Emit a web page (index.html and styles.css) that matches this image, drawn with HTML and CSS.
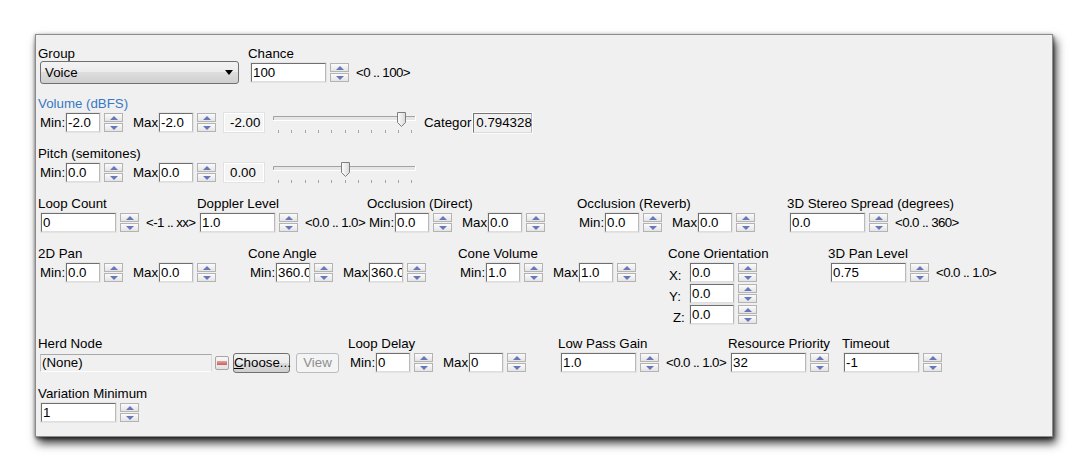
FILE: index.html
```html
<!DOCTYPE html>
<html>
<head>
<meta charset="utf-8">
<link rel="stylesheet" href="styles.css">
</head>
<body>
<div class="panel">
  <div class="row">
    <div class="grp w210">
      <div class="lbl">Group</div>
      <div class="ctl"><div class="combo"><span>Voice</span><span class="caret"></span></div></div>
    </div>
    <div class="grp">
      <div class="lbl">Chance</div>
      <div class="ctl p3"><span class="tb b">100</span><span class="spin"><i></i><i class="dn"></i></span><span class="rng">&lt;0 .. 100&gt;</span></div>
    </div>
  </div>

  <div class="row">
    <div class="grp">
      <div class="lbl blue">Volume (dBFS)</div>
      <div class="ctl p2">
        <span class="k">Min:</span><span class="tb s">-2.0</span><span class="spin"><i></i><i class="dn"></i></span>
        <span class="k mx">Max</span><span class="tb s">-2.0</span><span class="spin"><i></i><i class="dn"></i></span>
        <span class="ro">-2.00</span>
        <svg class="slider" width="144" height="22" viewBox="0 0 144 22">
          <defs><linearGradient id="tg1" x1="0" y1="0" x2="1" y2="0"><stop offset="0" stop-color="#fdfdfd"/><stop offset="1" stop-color="#d9d9d9"/></linearGradient></defs>
          <rect x="1" y="4" width="142" height="4" fill="#e6e6e6"/>
          <path d="M1.5 8 V4.5 H143" fill="none" stroke="#a3a3a3"/>
          <path d="M1 8.5 H143.5 V4" fill="none" stroke="#ffffff"/>
          <g stroke="#a5a5a5"><path d="M6.5 18V21M19.5 18V21M33.5 18V21M46.5 18V21M59.5 18V21M73.5 18V21M86.5 18V21M99.5 18V21M113.5 18V21M126.5 18V21M139.5 18V21"/></g>
          <path d="M125.5 0.5 H133.5 V10.5 L129.5 14.5 L125.5 10.5 Z" fill="url(#tg1)" stroke="#7e7e7e"/>
        </svg>
        <span class="cat">Categor</span><span class="rbox">0.794328</span>
      </div>
    </div>
  </div>

  <div class="row">
    <div class="grp">
      <div class="lbl">Pitch (semitones)</div>
      <div class="ctl p2">
        <span class="k">Min:</span><span class="tb s">0.0</span><span class="spin"><i></i><i class="dn"></i></span>
        <span class="k mx">Max</span><span class="tb s">0.0</span><span class="spin"><i></i><i class="dn"></i></span>
        <span class="ro">0.00</span>
        <svg class="slider" width="144" height="22" viewBox="0 0 144 22">
          <defs><linearGradient id="tg2" x1="0" y1="0" x2="1" y2="0"><stop offset="0" stop-color="#fdfdfd"/><stop offset="1" stop-color="#d9d9d9"/></linearGradient></defs>
          <rect x="1" y="4" width="142" height="4" fill="#e6e6e6"/>
          <path d="M1.5 8 V4.5 H143" fill="none" stroke="#a3a3a3"/>
          <path d="M1 8.5 H143.5 V4" fill="none" stroke="#ffffff"/>
          <g stroke="#a5a5a5"><path d="M6.5 18V21M19.5 18V21M33.5 18V21M46.5 18V21M59.5 18V21M73.5 18V21M86.5 18V21M99.5 18V21M113.5 18V21M126.5 18V21M139.5 18V21"/></g>
          <path d="M69.5 0.5 H77.5 V10.5 L73.5 14.5 L69.5 10.5 Z" fill="url(#tg2)" stroke="#7e7e7e"/>
        </svg>
      </div>
    </div>
  </div>

  <div class="row">
    <div class="grp w159">
      <div class="lbl">Loop Count</div>
      <div class="ctl p3"><span class="tb b">0</span><span class="spin"><i></i><i class="dn"></i></span><span class="rng">&lt;-1 .. xx&gt;</span></div>
    </div>
    <div class="grp w170">
      <div class="lbl">Doppler Level</div>
      <div class="ctl p3"><span class="tb b">1.0</span><span class="spin"><i></i><i class="dn"></i></span><span class="rng">&lt;0.0 .. 1.0&gt;</span></div>
    </div>
    <div class="grp w210">
      <div class="lbl">Occlusion (Direct)</div>
      <div class="ctl p2">
        <span class="k">Min:</span><span class="tb s">0.0</span><span class="spin"><i></i><i class="dn"></i></span>
        <span class="k mx">Max</span><span class="tb s">0.0</span><span class="spin"><i></i><i class="dn"></i></span>
      </div>
    </div>
    <div class="grp w210">
      <div class="lbl">Occlusion (Reverb)</div>
      <div class="ctl p2">
        <span class="k">Min:</span><span class="tb s">0.0</span><span class="spin"><i></i><i class="dn"></i></span>
        <span class="k mx">Max</span><span class="tb s">0.0</span><span class="spin"><i></i><i class="dn"></i></span>
      </div>
    </div>
    <div class="grp">
      <div class="lbl">3D Stereo Spread (degrees)</div>
      <div class="ctl p3"><span class="tb b">0.0</span><span class="spin"><i></i><i class="dn"></i></span><span class="rng">&lt;0.0 .. 360&gt;</span></div>
    </div>
  </div>

  <div class="row tall">
    <div class="grp w210">
      <div class="lbl">2D Pan</div>
      <div class="ctl p2">
        <span class="k">Min:</span><span class="tb s">0.0</span><span class="spin"><i></i><i class="dn"></i></span>
        <span class="k mx">Max</span><span class="tb s">0.0</span><span class="spin"><i></i><i class="dn"></i></span>
      </div>
    </div>
    <div class="grp w210">
      <div class="lbl">Cone Angle</div>
      <div class="ctl p2">
        <span class="k">Min:</span><span class="tb s">360.0</span><span class="spin"><i></i><i class="dn"></i></span>
        <span class="k mx">Max</span><span class="tb s">360.0</span><span class="spin"><i></i><i class="dn"></i></span>
      </div>
    </div>
    <div class="grp w210">
      <div class="lbl">Cone Volume</div>
      <div class="ctl p2">
        <span class="k">Min:</span><span class="tb s">1.0</span><span class="spin"><i></i><i class="dn"></i></span>
        <span class="k mx">Max</span><span class="tb s">1.0</span><span class="spin"><i></i><i class="dn"></i></span>
      </div>
    </div>
    <div class="grp w160">
      <div class="lbl">Cone Orientation</div>
      <div class="ctl axis"><span class="ax">X:</span><span class="tb m">0.0</span><span class="spin"><i></i><i class="dn"></i></span></div>
      <div class="ctl axis"><span class="ax ay">Y:</span><span class="tb m">0.0</span><span class="spin"><i></i><i class="dn"></i></span></div>
      <div class="ctl axis"><span class="ax az">Z:</span><span class="tb m">0.0</span><span class="spin"><i></i><i class="dn"></i></span></div>
    </div>
    <div class="grp">
      <div class="lbl">3D Pan Level</div>
      <div class="ctl p3"><span class="tb b">0.75</span><span class="spin"><i></i><i class="dn"></i></span><span class="rng">&lt;0.0 .. 1.0&gt;</span></div>
    </div>
  </div>

  <div class="row">
    <div class="grp w310">
      <div class="lbl">Herd Node</div>
      <div class="ctl p2">
        <span class="herd">(None)</span>
        <span class="minus"><b></b></span>
        <span class="btn"><u>C</u>hoose...</span>
        <span class="btn off">View</span>
      </div>
    </div>
    <div class="grp w210">
      <div class="lbl">Loop Delay</div>
      <div class="ctl p2">
        <span class="k">Min:</span><span class="tb s">0</span><span class="spin"><i></i><i class="dn"></i></span>
        <span class="k mx">Max</span><span class="tb s">0</span><span class="spin"><i></i><i class="dn"></i></span>
      </div>
    </div>
    <div class="grp w170">
      <div class="lbl">Low Pass Gain</div>
      <div class="ctl p3"><span class="tb b">1.0</span><span class="spin"><i></i><i class="dn"></i></span><span class="rng">&lt;0.0 .. 1.0&gt;</span></div>
    </div>
    <div class="grp w114">
      <div class="lbl">Resource Priority</div>
      <div class="ctl p3"><span class="tb b">32</span><span class="spin"><i></i><i class="dn"></i></span></div>
    </div>
    <div class="grp">
      <div class="lbl">Timeout</div>
      <div class="ctl p2"><span class="tb b">-1</span><span class="spin"><i></i><i class="dn"></i></span></div>
    </div>
  </div>

  <div class="row">
    <div class="grp">
      <div class="lbl">Variation Minimum</div>
      <div class="ctl p3"><span class="tb b">1</span><span class="spin"><i></i><i class="dn"></i></span></div>
    </div>
  </div>
</div>
</body>
</html>
```

FILE: styles.css
```css
html, body {
  margin: 0;
  padding: 0;
  background: #ffffff;
}
body {
  font-family: "Liberation Sans", Arial, sans-serif;
  font-size: 13.3px;
  color: #000;
  padding: 34px 0 36px 35px;
}
.panel {
  box-sizing: border-box;
  width: 1018px;
  height: 403px;
  background: #f0f0f0;
  border: 1px solid #8c8c8c;
  padding: 11px 0 0 2px;
  box-shadow: 3px 6px 9px rgba(0, 0, 0, 0.8), 1px 2px 3px rgba(0, 0, 0, 0.45), -1px 0 3px rgba(0, 0, 0, 0.15);
}
.row {
  display: flex;
  height: 50px;
}
.row.tall { height: 90px; }
.grp {
  display: flex;
  flex-direction: column;
  flex: none;
}
.w114 { width: 114px; }
.w159 { width: 159px; }
.w160 { width: 160px; }
.w170 { width: 170px; }
.w210 { width: 210px; }
.w310 { width: 310px; }
.lbl {
  height: 16px;
  line-height: 15px;
  white-space: nowrap;
}
.lbl.blue { color: #3878c4; }
.ctl {
  display: flex;
  align-items: center;
  height: 21px;
  white-space: nowrap;
}
.p2 { padding-left: 2px; }
.p3 { padding-left: 3px; }

.tb {
  box-sizing: border-box;
  height: 19px;
  line-height: 17px;
  background: #fff;
  border: 1px solid;
  border-color: #6f6f6f #b9b9b9 #dedede #6f6f6f;
  box-shadow: 0 0 0 1px #e4e4e4;
  padding-left: 1px;
  overflow: hidden;
  white-space: nowrap;
  flex: none;
}
.tb.s { width: 34px; }
.tb.b { width: 75px; }
.tb.m { width: 44px; }

.k { width: 26px; flex: none; }
.k.mx { margin-left: 10px; }

.spin {
  display: flex;
  flex-direction: column;
  gap: 1px;
  width: 19px;
  margin-left: 4px;
  flex: none;
}
.spin i {
  box-sizing: border-box;
  height: 9px;
  border: 1px solid #b3b3b3;
  background: linear-gradient(#fbfbfb, #e4e4e4);
  display: flex;
  align-items: center;
  justify-content: center;
}
.spin i::after {
  content: "";
  width: 0;
  height: 0;
  border-left: 4px solid transparent;
  border-right: 4px solid transparent;
  border-bottom: 4px solid #6678ba;
}
.spin i.dn::after {
  border-bottom: 0;
  border-top: 4px solid #6678ba;
}
.rng {
  margin-left: 7px;
  letter-spacing: -0.6px;
}

.combo {
  box-sizing: border-box;
  width: 199px;
  height: 23px;
  margin-left: 2px;
  border: 1px solid #707070;
  border-radius: 3px;
  background: linear-gradient(#f3f3f3, #ebebeb 50%, #dddddd 50%, #cfcfcf);
  display: flex;
  align-items: center;
  justify-content: space-between;
  padding: 0 5px 0 4px;
}
.caret {
  width: 0;
  height: 0;
  border-left: 4.5px solid transparent;
  border-right: 4.5px solid transparent;
  border-top: 5px solid #000;
}

.ro {
  box-sizing: border-box;
  width: 40px;
  height: 19px;
  line-height: 17px;
  margin-left: 8px;
  padding-left: 5px;
  background: #f4f4f4;
  border: 1px solid #ffffff;
  box-shadow: 0 0 0 1px #e2e2e2;
  flex: none;
}
.slider {
  display: block;
  margin-left: 8px;
  align-self: flex-start;
  flex: none;
}
.cat {
  margin-left: 8px;
  margin-right: 2px;
  flex: none;
}
.rbox {
  box-sizing: border-box;
  width: 59px;
  height: 20px;
  line-height: 18px;
  padding-left: 2px;
  background: #f0f0f0;
  border: 1px solid;
  border-color: #777 #b9b9b9 #dcdcdc #777;
  box-shadow: 0 0 0 1px #fafafa;
  flex: none;
}

.axis { width: 95px; }
.ax { width: 22px; padding-left: 1px; box-sizing: border-box; line-height: 14px; align-self: flex-end; }
.ay { padding-left: 1px; }
.az { padding-left: 5px; }

.herd {
  box-sizing: border-box;
  width: 172px;
  height: 18px;
  line-height: 16px;
  padding-left: 1px;
  background: #f0f0f0;
  border: 1px solid;
  border-color: #a9a9a9 #dadada #fdfdfd #c2c2c2;
  flex: none;
}
.minus {
  box-sizing: border-box;
  width: 14px;
  height: 14px;
  margin-left: 3px;
  border: 1px solid #a5a5a5;
  border-radius: 2px;
  background: linear-gradient(#f7f7f7, #e1e1e1);
  display: flex;
  align-items: center;
  justify-content: center;
  flex: none;
}
.minus b {
  width: 10px;
  height: 4px;
  background: linear-gradient(#e7a1a1, #c95c5c);
}
.btn {
  box-sizing: border-box;
  height: 20px;
  line-height: 18px;
  width: 57px;
  margin-left: 4px;
  text-align: center;
  border: 1px solid #707070;
  border-radius: 3px;
  background: linear-gradient(#f2f2f2, #ebebeb 50%, #dddddd 50%, #cfcfcf);
  flex: none;
}
.btn.off {
  width: 43px;
  margin-left: 6px;
  color: #8f8f8f;
  border-color: #b8bcbf;
  background: #f4f4f4;
}
```
